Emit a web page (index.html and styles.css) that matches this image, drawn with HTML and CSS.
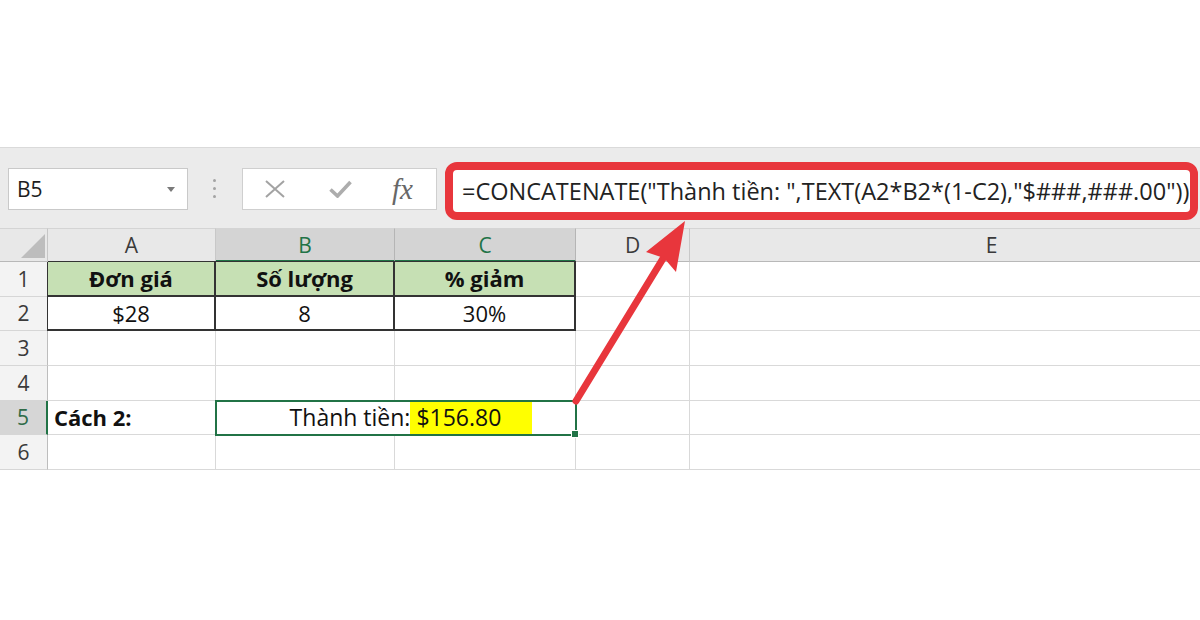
FILE: index.html
```html
<!DOCTYPE html>
<html lang="vi">
<head>
<meta charset="utf-8">
<title>CONCATENATE TEXT</title>
<link rel="stylesheet" href="styles.css">
</head>
<body>
<div class="page">
  <div class="top-space"></div>
  <div class="formula-bar">
    <div class="name-box"><span class="name">B5</span><span class="caret"></span></div>
    <div class="grip"><i></i><i></i><i></i></div>
    <div class="fx-buttons">
      <svg class="btn-x" viewBox="0 0 20 18" width="20" height="18"><path d="M1 1 L19 17 M19 1 L1 17" stroke="#a3a3a3" stroke-width="2" fill="none"/></svg>
      <svg class="btn-check" viewBox="0 0 23 18" width="23" height="18"><path d="M1.5 9.5 L8.5 16 L21.5 2" stroke="#adadad" stroke-width="3.6" fill="none"/></svg>
      <span class="fx">fx</span>
    </div>
    <div class="formula-input">=CONCATENATE("Thành tiền: ",TEXT(A2*B2*(1-C2),"$###,###.00"))</div>
  </div>
  <div class="sheet">
    <div class="corner"><span class="tri"></span></div>
    <div class="col-h">A</div>
    <div class="col-h sel">B</div>
    <div class="col-h sel">C</div>
    <div class="col-h">D</div>
    <div class="col-h">E</div>

    <div class="row-h">1</div>
    <div class="hd tb tb-top tb-left">Đơn giá</div>
    <div class="hd tb tb-top">Số lượng</div>
    <div class="hd tb tb-top">% giảm</div>
    <div class="cell"></div>
    <div class="cell"></div>

    <div class="row-h">2</div>
    <div class="tb tb-left">$28</div>
    <div class="tb">8</div>
    <div class="tb">30%</div>
    <div class="cell"></div>
    <div class="cell"></div>

    <div class="row-h">3</div>
    <div class="cell"></div>
    <div class="cell"></div>
    <div class="cell"></div>
    <div class="cell"></div>
    <div class="cell"></div>

    <div class="row-h">4</div>
    <div class="cell"></div>
    <div class="cell"></div>
    <div class="cell"></div>
    <div class="cell"></div>
    <div class="cell"></div>

    <div class="row-h sel">5</div>
    <div class="cell left bold">Cách 2:</div>
    <div class="cell merged">Thành tiền:<span class="hl">$156.80</span></div>
    <div class="cell"></div>
    <div class="cell"></div>

    <div class="row-h">6</div>
    <div class="cell"></div>
    <div class="cell"></div>
    <div class="cell"></div>
    <div class="cell"></div>
    <div class="cell"></div>
  </div>
  <svg class="arrow" width="1200" height="620" viewBox="0 0 1200 620">
    <line x1="576" y1="401" x2="667" y2="252" stroke="#e8363c" stroke-width="7" stroke-linecap="round"/>
    <polygon points="685,221 676,272 664,258 646,252" fill="#e8363c"/>
  </svg>
</div>
</body>
</html>
```
FILE: styles.css
```css
body {
  margin: 0;
  background: #ffffff;
  font-family: "Open Sans", "Noto Sans", sans-serif;
}

.page {
  position: relative;
  width: 1200px;
  height: 620px;
  overflow: hidden;
  background: #ffffff;
}

.top-space {
  height: 147px;
}

.formula-bar {
  height: 80px;
  border-top: 1px solid #dadada;
  background: #ebebeb;
  display: flex;
  align-items: center;
  padding-left: 8px;
}

.name-box {
  width: 180px;
  height: 42px;
  margin-top: 2px;
  box-sizing: border-box;
  background: #ffffff;
  border: 1px solid #c9c9c9;
  display: flex;
  align-items: center;
  justify-content: space-between;
  padding: 0 12px 0 8px;
  font-size: 21px;
  color: #1e1e1e;
}

.caret {
  width: 0;
  height: 0;
  border-left: 4px solid transparent;
  border-right: 4px solid transparent;
  border-top: 5px solid #7a7a7a;
}

.grip {
  margin-left: 25px;
  display: flex;
  flex-direction: column;
  gap: 5px;
}

.grip i {
  display: block;
  width: 3px;
  height: 3px;
  border-radius: 50%;
  background: #a3a3a3;
}

.fx-buttons {
  margin-left: 26px;
  margin-top: 2px;
  width: 195px;
  height: 42px;
  box-sizing: border-box;
  background: #ffffff;
  border: 1px solid #cfcfcf;
  display: flex;
  align-items: center;
  padding-left: 22px;
}

.btn-check {
  margin-left: 44px;
}

.fx {
  margin-left: 40px;
  font-family: "Liberation Serif", "DejaVu Serif", serif;
  font-style: italic;
  font-size: 29px;
  line-height: 1;
  color: #676767;
}

.formula-input {
  margin-left: 8px;
  margin-top: 6px;
  width: 753px;
  height: 58px;
  box-sizing: border-box;
  border: 8px solid #e8363c;
  border-radius: 12px;
  background: #ffffff;
  display: flex;
  align-items: center;
  padding-left: 9px;
  font-size: 23.5px;
  color: #222222;
  white-space: nowrap;
}

.sheet {
  display: grid;
  grid-template-columns: 48px 168px 179px 181px 114px 604px;
  grid-template-rows: 34px repeat(6, 34.67px);
}

.sheet > div {
  box-sizing: border-box;
  border-right: 1px solid #d9d9d9;
  border-bottom: 1px solid #d9d9d9;
  display: flex;
  align-items: center;
  justify-content: center;
  font-size: 22px;
  color: #111111;
  white-space: nowrap;
}

.sheet > .corner {
  background: #e8e8e8;
  border-top: 1px solid #d4d4d4;
  border-right: 1px solid #c6c6c6;
  border-bottom: 1px solid #b8b8b8;
  justify-content: flex-end;
  align-items: flex-end;
  padding: 0 2px 3px 0;
}

.tri {
  display: block;
  width: 24px;
  height: 24px;
  background: #bdbdbd;
  clip-path: polygon(100% 0, 100% 100%, 0 100%);
}

.sheet > .col-h {
  background: #e8e8e8;
  color: #3a3a3a;
  font-size: 21px;
  border-top: 1px solid #d4d4d4;
  border-right: 1px solid #c8c8c8;
  border-bottom: 1px solid #b8b8b8;
}

.sheet > .col-h.sel {
  background: #d4d4d4;
  color: #217346;
  border-bottom: 2px solid #217346;
  border-right-color: #b5b5b5;
}

.sheet > .row-h {
  background: #f3f3f3;
  color: #3a3a3a;
  font-size: 21px;
  border-right: 1px solid #bdbdbd;
  border-bottom: 1px solid #d6d6d6;
}

.sheet > .row-h.sel {
  background: #d6d6d6;
  color: #2f6b47;
  border-right: 2px solid #217346;
}

.sheet > .hd {
  background: #c6e0b4;
  font-weight: 700;
}

.sheet > .tb {
  border-right: 2px solid #333333;
  border-bottom: 2px solid #333333;
}

.sheet > .tb-top {
  box-shadow: 0 -1px 0 #333333;
}

.sheet > .tb-left {
  box-shadow: -1px 0 0 #333333;
}

.sheet > .tb-top.tb-left {
  box-shadow: 0 -1px 0 #333333, -1px 0 0 #333333;
}

.sheet > .left {
  justify-content: flex-start;
  padding-left: 6px;
}

.sheet > .bold {
  font-weight: 700;
}

.sheet > .merged {
  grid-column: span 2;
  position: relative;
  outline: 2px solid #217346;
  outline-offset: -1px;
  line-height: 33px;
  font-size: 23px;
}

.merged::after {
  content: "";
  position: absolute;
  right: -4px;
  bottom: -4px;
  width: 6px;
  height: 6px;
  background: #217346;
  border: 1px solid #ffffff;
}

.hl {
  display: inline-block;
  background: #ffff00;
  line-height: 33px;
  padding-left: 6px;
  padding-right: 31px;
  margin-right: -31px;
}

.arrow {
  position: absolute;
  left: 0;
  top: 0;
  pointer-events: none;
}
```
